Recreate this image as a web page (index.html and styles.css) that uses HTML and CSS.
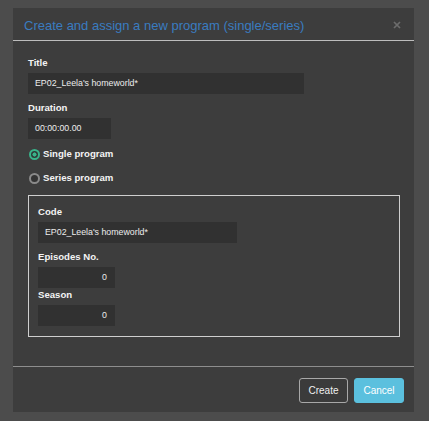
FILE: index.html
```html
<!DOCTYPE html>
<html>
<head>
<meta charset="utf-8">
<link rel="stylesheet" href="styles.css">
</head>
<body>
<div class="dialog">
  <div class="dlg-header">
    <div class="dlg-title">Create and assign a new program (single/series)</div>
    <svg class="close" width="8" height="8" viewBox="0 0 8 8"><path d="M1 1L7 7M7 1L1 7" stroke="#6c6c6c" stroke-width="1.7"/></svg>
  </div>
  <div class="dlg-body">
    <div class="field">
      <div class="label">Title</div>
      <div class="input wide">EP02_Leela's homeworld*</div>
    </div>
    <div class="field">
      <div class="label">Duration</div>
      <div class="input short">00:00:00.00</div>
    </div>
    <div class="radio-row"><span class="radio checked"></span><span class="label">Single program</span></div>
    <div class="radio-row"><span class="radio"></span><span class="label">Series program</span></div>
    <div class="fieldset">
      <div class="field">
        <div class="label">Code</div>
        <div class="input code">EP02_Leela's homeworld*</div>
      </div>
      <div class="field tight">
        <div class="label">Episodes No.</div>
        <div class="input num">0</div>
      </div>
      <div class="field last">
        <div class="label">Season</div>
        <div class="input num">0</div>
      </div>
    </div>
  </div>
  <div class="dlg-footer">
    <button class="btn btn-default">Create</button>
    <button class="btn btn-info">Cancel</button>
  </div>
</div>
</body>
</html>
```
FILE: styles.css
```css
html, body {
  margin: 0;
  padding: 0;
}
body {
  width: 429px;
  height: 421px;
  background: #4c4c4c;
  font-family: "Liberation Sans", Arial, sans-serif;
  padding-top: 8px;
  padding-left: 13px;
  box-sizing: border-box;
  overflow: hidden;
}
.dialog {
  width: 401px;
  height: 404px;
  background: #3d3d3d;
  display: flex;
  flex-direction: column;
}
.dlg-header {
  height: 33px;
  border-bottom: 1.5px solid #bdbdbd;
  display: flex;
  align-items: center;
  justify-content: space-between;
  padding: 2px 13px 0 11px;
  box-sizing: border-box;
}
.dlg-title {
  color: #3a7cc0;
  font-size: 13px;
}
.dlg-body {
  flex: 1;
  padding: 16px 14px 0 15px;
}
.field {
  margin-bottom: 8px;
}
.label {
  color: #f4f4f4;
  font-weight: bold;
  font-size: 9.6px;
  line-height: 12px;
  margin-bottom: 4px;
}
.input {
  height: 21px;
  background: #313131;
  color: #ececec;
  font-size: 8.8px;
  line-height: 21px;
  padding: 0 7px;
  box-sizing: border-box;
}
.wide { width: 276px; }
.short { width: 83px; }
.code { width: 199px; }
.num { width: 77px; text-align: right; padding-right: 8px; }
.radio-row {
  height: 24px;
  display: flex;
  align-items: center;
  gap: 3px;
}
.radio-row .label {
  margin-bottom: 0;
}
.dlg-body > .field:nth-child(2) {
  margin-bottom: 3px;
}
.radio {
  width: 11px;
  height: 11px;
  border-radius: 50%;
  box-sizing: border-box;
  border: 2px solid #8a8a8a;
  background: #333;
  margin-left: 1px;
}
.radio.checked {
  border-color: #39b38a;
  background: radial-gradient(circle, #39b38a 0 1.8px, #2e3a36 2.3px);
}
.fieldset {
  margin-top: 5px;
  border: 1px solid #cfcfcf;
  height: 142px;
  box-sizing: border-box;
  padding: 10px 9px 0 9px;
}
.field.tight {
  margin-bottom: 1px;
}
.field.last {
  margin-bottom: 0;
}
.dlg-footer {
  height: 46px;
  border-top: 1.5px solid #8e8e8e;
  display: flex;
  justify-content: flex-end;
  align-items: flex-start;
  gap: 6px;
  padding: 11px 10px 0 0;
  box-sizing: border-box;
}
.btn {
  height: 25px;
  font-family: "Liberation Sans", Arial, sans-serif;
  font-size: 10px;
  border-radius: 3px;
  padding: 0;
  cursor: pointer;
}
.btn-default {
  width: 49px;
  background: #3b3b3b;
  color: #f0f0f0;
  border: 1px solid #a8a8a8;
}
.btn-info {
  width: 50px;
  background: #5bc0de;
  color: #ffffff;
  border: 1px solid #5bc0de;
}
```
